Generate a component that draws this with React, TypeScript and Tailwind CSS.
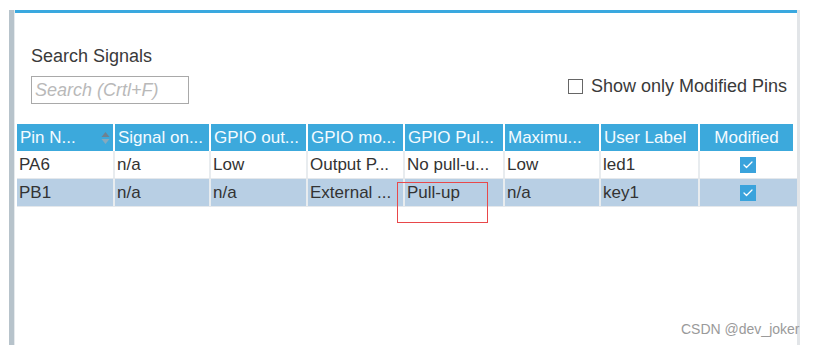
import { Check } from "lucide-react";

type Row = {
  cells: string[];
  modified: boolean;
  selected?: boolean;
};

// column widths measured off the pin table
const widths = [98, 96, 97, 97, 100, 96, 99, 95];

const headers = [
  "Pin N...",
  "Signal on...",
  "GPIO out...",
  "GPIO mo...",
  "GPIO Pul...",
  "Maximu...",
  "User Label",
  "Modified",
];

const rows: Row[] = [
  {
    cells: ["PA6", "n/a", "Low", "Output P...", "No pull-u...", "Low", "led1"],
    modified: true,
  },
  {
    cells: ["PB1", "n/a", "n/a", "External ...", "Pull-up", "n/a", "key1"],
    modified: true,
    selected: true,
  },
];

function SortIcon() {
  return (
    <svg width="9" height="14" viewBox="0 0 9 14" className="shrink-0">
      <path d="M4.5 1 L8.5 6 L0.5 6 Z" fill="#6f8290" />
      <path d="M4.5 13 L8.5 8 L0.5 8 Z" fill="#86a9bd" />
    </svg>
  );
}

function CheckMark() {
  return (
    <span className="flex h-[16px] w-[16px] items-center justify-center bg-[#3aa3dc]">
      <Check size={12} strokeWidth={2.5} color="#ffffff" />
    </span>
  );
}

export default function App() {
  return (
    <div
      className="relative flex h-[345px] w-[814px] overflow-hidden bg-white pl-[9px] pt-[10px] text-[#333]"
      style={{ fontFamily: '"Liberation Sans", Arial, sans-serif' }}
    >
      <div className="w-[5px] bg-[#b7c3cb]" />
      <div className="w-[1px] bg-[#e6eaed]" />
      <div className="flex w-[782px] flex-col border-t-[3px] border-[#3aa8df]">
        <div className="flex items-end justify-between pl-[16px] pr-[10px] pt-[32px]">
          <div className="flex flex-col">
            <span className="text-[18px] leading-[22px] text-[#3a3a3a]">Search Signals</span>
            <div className="mt-[9px] flex h-[28px] w-[158px] items-center border border-[#a9a9a9] px-[3px]">
              <span className="whitespace-nowrap text-[18px] italic text-[#b9b9b9]">Search (Crtl+F)</span>
            </div>
          </div>
          <label className="mb-[8px] flex items-center gap-[8px]">
            <span className="h-[15px] w-[15px] border border-[#666]" />
            <span className="text-[18px] leading-[20px] text-[#3a3a3a]">Show only Modified Pins</span>
          </label>
        </div>

        <div className="ml-[2px] mt-[20px] flex flex-col">
          <div className="flex h-[27px]">
            {headers.map((h, i) => (
              <div
                key={h}
                style={{ width: widths[i] }}
                className={`flex items-center border-r-2 border-white bg-[#3ca9dc] px-[3px] text-[17px] text-[#f4fbff] ${
                  i === 0 ? "justify-between" : i === 7 ? "justify-center" : "justify-start"
                }`}
              >
                <span className="whitespace-nowrap">{h}</span>
                {i === 0 && <SortIcon />}
              </div>
            ))}
          </div>
          {rows.map((r) => (
            <div
              key={r.cells[0]}
              className={`flex h-[28px] border-b border-[#e4e8ec] ${r.selected ? "bg-[#b8cfe4]" : "bg-white"}`}
            >
              {r.cells.map((c, i) => (
                <div
                  key={i}
                  style={{ width: widths[i] }}
                  className="flex items-center border-r-2 border-[#e8ecef] px-[2px] text-[17px] whitespace-nowrap"
                >
                  {c}
                </div>
              ))}
              <div style={{ width: widths[7] }} className="flex items-center justify-center">
                {r.modified && <CheckMark />}
              </div>
            </div>
          ))}
        </div>
      </div>
      <div className="w-[3px] bg-[#e2e5e8]" />

      {/* red annotation box over the GPIO Pull cell */}
      <div className="absolute left-[397px] top-[182px] h-[41px] w-[91px] border border-[#e8484a]" />

      <span className="absolute left-[681px] top-[319px] text-[14px] text-[#9a9a9a]">CSDN @dev_joker</span>
    </div>
  );
}
